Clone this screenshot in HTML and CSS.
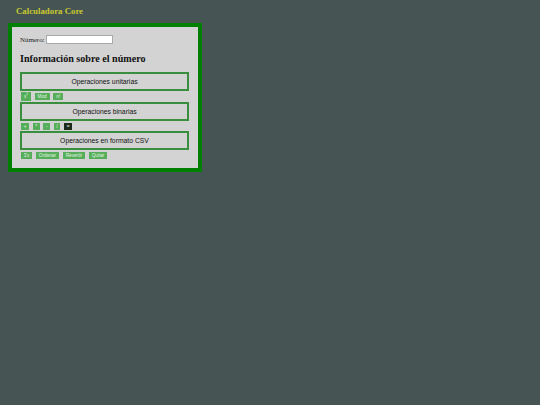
FILE: index.html
```html
<!DOCTYPE html>
<html lang="en">
<head>
    <meta charset="UTF-8">
    <title>Calculadora Core</title>
    <link rel="stylesheet" href="styles.css">
</head>
<body>
    <h1>Calculadora Core</h1>
    <div class="card">
        <div class="field">
            <label for="numero">Número:</label>
            <input type="text" id="numero">
        </div>
        <h2>Información sobre el número</h2>

        <div class="panel">Operaciones unitarias</div>
        <div class="ops">
            <button class="tall">x<sup>2</sup></button>
            <button>Mod</button>
            <button>n!</button>
        </div>

        <div class="panel">Operaciones binarias</div>
        <div class="ops short tight">
            <button>+</button>
            <button>*</button>
            <button>-</button>
            <button>/</button>
            <button class="active">=</button>
        </div>

        <div class="panel">Operaciones en formato CSV</div>
        <div class="ops">
            <button>Σx</button>
            <button>Ordenar</button>
            <button>Revertir</button>
            <button>Quitar</button>
        </div>
    </div>
</body>
</html>
```

FILE: styles.css
```css
body {
    margin: 0;
    background-color: #465553;
    font-family: "Liberation Serif", serif;
}
h1 {
    margin: 0;
    padding: 6px 16px 0;
    height: 17px;
    color: #c9c92e;
    font-size: 8.8px;
    line-height: 11px;
    font-weight: bold;
}
.card {
    width: 169px;
    margin-left: 8px;
    padding: 7px 9px 7px 8px;
    border: 4px solid #008000;
    background-color: #d3d3d3;
    color: #000;
}
.field {
    display: flex;
    align-items: center;
    gap: 1px;
    height: 10px;
    font-size: 6.9px;
    color: #222;
}
.field input {
    box-sizing: border-box;
    width: 67px;
    height: 9px;
    padding: 0;
    border: 1px solid #aaa;
    background-color: #fff;
}
h2 {
    margin: 8px 0 7px;
    font-size: 10.1px;
    line-height: 13px;
    color: #111;
}
.panel {
    box-sizing: border-box;
    height: 19px;
    border: 2px solid #3a8f3e;
    color: #111;
    font-family: "Liberation Sans", sans-serif;
    font-size: 6.8px;
    line-height: 15px;
    text-align: center;
}
.ops {
    display: flex;
    gap: 3.6px;
    height: 11px;
    padding-left: 1px;
    align-items: center;
}
.ops.short {
    height: 10px;
}
.ops.tight {
    gap: 3.5px;
}
.ops.tight button {
    padding: 0 2.7px;
}
.ops button {
    height: 7px;
    padding: 0 3px;
    border: 0;
    background-color: #55ae59;
    color: #e6f2e6;
    font-family: "Liberation Sans", sans-serif;
    font-size: 4.7px;
    line-height: 7px;
}
.ops button.tall {
    height: 9px;
}
.ops button sup {
    font-size: 3px;
    line-height: 0;
}
.ops button.active {
    background-color: #1c2b1c;
}
```
